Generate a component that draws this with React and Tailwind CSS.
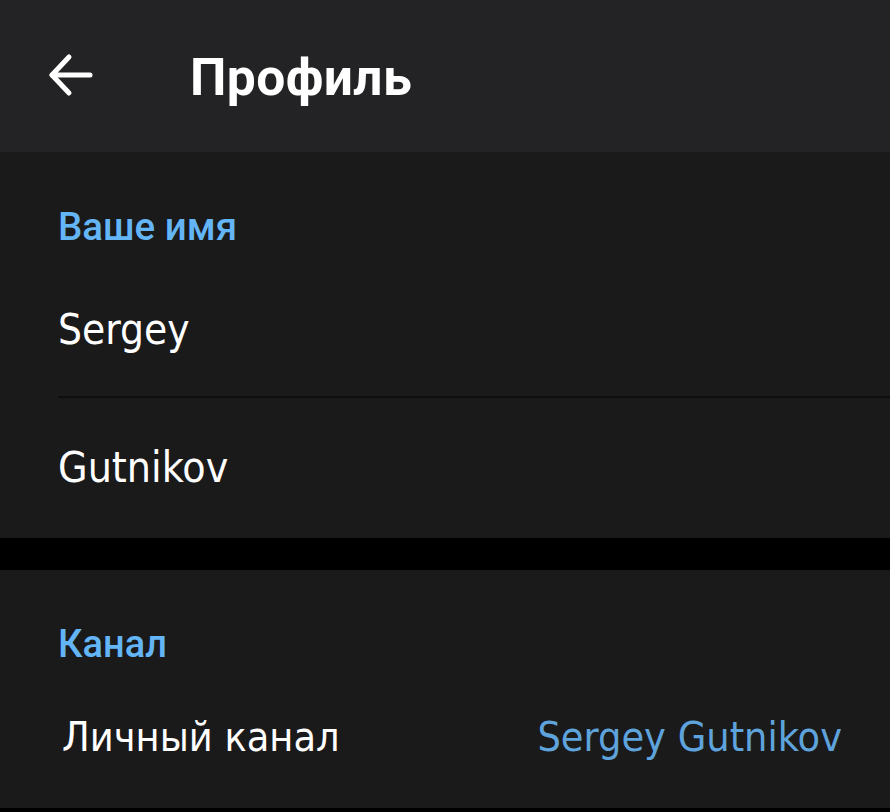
export default function App() {
  const body = "font-['DejaVu_Sans_Condensed','DejaVu_Sans',sans-serif] font-stretch-condensed";
  const head = "font-['Roboto','Noto_Sans',sans-serif]";
  return (
    <div className="w-[890px] h-[812px] bg-black overflow-hidden flex flex-col">
      <header className="h-[152px] shrink-0 bg-[#232325] flex items-center">
        <svg className="ml-[48px] w-[46px] h-[46px]" viewBox="0 0 46 46" fill="none" stroke="#ffffff" strokeWidth="5" strokeLinecap="round" strokeLinejoin="round">
          <path d="M4 22 H42" />
          <path d="M21 4 L4 22 L21 40" />
        </svg>
        <h1 className={`${head} ml-[96px] mt-[4px] text-[51.5px] font-bold text-white leading-none tracking-[0.4px]`}>Профиль</h1>
      </header>

      <section className="bg-[#1a1a1a] h-[386px] shrink-0 flex flex-col">
        <div className="h-[110px] pt-[53px] pl-[58px]">
          <div className={`${head} text-[38.5px] font-medium text-[#64b5f6] leading-[1.15]`}>Ваше имя</div>
        </div>
        <div className="h-[134px] flex items-center pl-[58px]">
          <span className={`${body} text-[42px] text-white`}>Sergey</span>
        </div>
        <div className="h-[2px] ml-[58px] bg-[#0e0e0e]" />
        <div className="h-[140px] flex items-center pl-[58px]">
          <span className={`${body} text-[42.5px] text-white`}>Gutnikov</span>
        </div>
      </section>

      <div className="h-[32px] shrink-0" />

      <section className="bg-[#1a1a1a] h-[238px] shrink-0 flex flex-col">
        <div className="h-[110px] pt-[53px] pl-[58px]">
          <div className={`${head} text-[38px] font-medium text-[#64b5f6] leading-[1.15]`}>Канал</div>
        </div>
        <div className="h-[116px] flex items-center justify-between pl-[62px] pr-[48px]">
          <span className={`${body} text-[41px] text-white`}>Личный канал</span>
          <span className={`${body} text-[41px] text-[#5ea3dc]`}>Sergey Gutnikov</span>
        </div>
      </section>
    </div>
  );
}
